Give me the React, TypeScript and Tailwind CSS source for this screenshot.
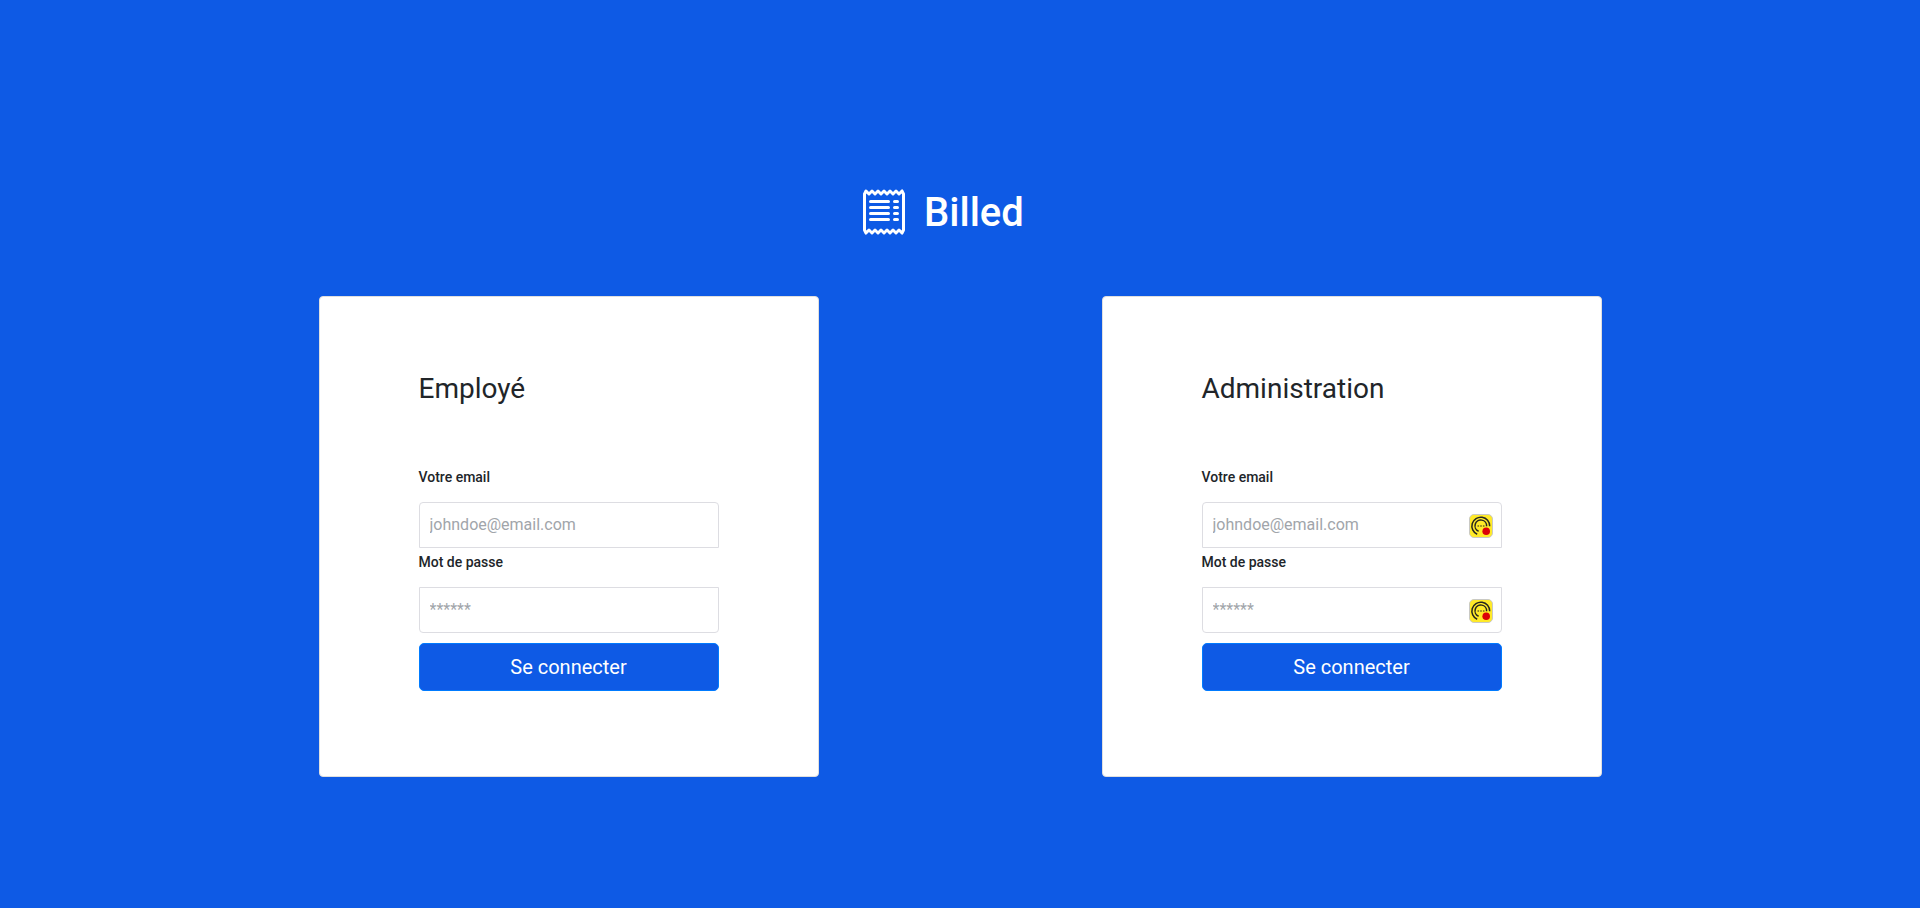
import React from "react";
import { BsReceipt } from "react-icons/bs";

function CredentialBadge() {
  return (
    <svg
      viewBox="0 0 24 24"
      className="absolute top-[12px] right-[9px] h-6 w-6"
      aria-hidden="true"
    >
      <rect x="0.5" y="0.5" width="23" height="23" rx="4.5" fill="#ffea28" stroke="#c9c9c4" />
      <g fill="none" stroke="#26261f" strokeWidth="1.5">
        <path d="M8.2 20.2A8.9 8.9 0 1 1 20.7 12.2" />
        <path d="M9.6 17.2A5.8 5.8 0 1 1 17.6 12.2" />
      </g>
      <path d="M8.5 12h1.6M11.2 12h1.6M13.9 12h1.6" stroke="#26261f" strokeWidth="1.2" />
      <circle cx="17.2" cy="17.3" r="3.8" fill="#db0007" />
    </svg>
  );
}

type FieldProps = { label: string; type: string; placeholder: string; badge: boolean; shape: string };

function Field({ label, type, placeholder, badge, shape }: FieldProps) {
  return (
    <label className="block">
      <span className="block h-[39px] pt-[4px] text-sm leading-[21px] font-medium">{label}</span>
      <span className="relative block">
        <input
          type={type}
          placeholder={placeholder}
          className={`block h-[46px] w-full border border-[#dddde2] bg-white px-[10px] pb-[1px] text-base placeholder:text-[#a1a5aa] ${shape}`}
        />
        {badge && <CredentialBadge />}
      </span>
    </label>
  );
}

function LoginCard({ title, badge }: { title: string; badge: boolean }) {
  return (
    <section className="h-[481px] w-[500px] rounded border border-[#dfdfdf] bg-white px-[99px] pt-[75px]">
      <h3 className="h-[91px] text-[28px] leading-[34px] font-normal">{title}</h3>
      <form onSubmit={(e) => e.preventDefault()}>
        <Field label="Votre email" type="email" placeholder="johndoe@email.com" badge={badge} shape="rounded-t" />
        <Field label="Mot de passe" type="password" placeholder="******" badge={badge} shape="rounded-b" />
        <button
          type="submit"
          className="mt-[10px] block h-12 w-full rounded-[5px] border border-[#007bff] bg-[#0e5ae5] text-xl leading-[30px] text-white"
        >
          Se connecter
        </button>
      </form>
    </section>
  );
}

export default function App() {
  return (
    <main className="h-[908px] w-full overflow-hidden bg-[#0e5ae5] pt-[182px] font-[Roboto,sans-serif] text-[#212529]">
      <header className="flex h-[60px] items-center pl-[860px] text-white">
        <BsReceipt size={48} />
        <h1 className="ml-4 pt-[2px] text-[40px] leading-[60px] font-medium">Billed</h1>
      </header>
      <div className="mt-[54px] flex gap-[283px] pl-[318.5px]">
        <LoginCard title="Employé" badge={false} />
        <LoginCard title="Administration" badge />
      </div>
    </main>
  );
}
